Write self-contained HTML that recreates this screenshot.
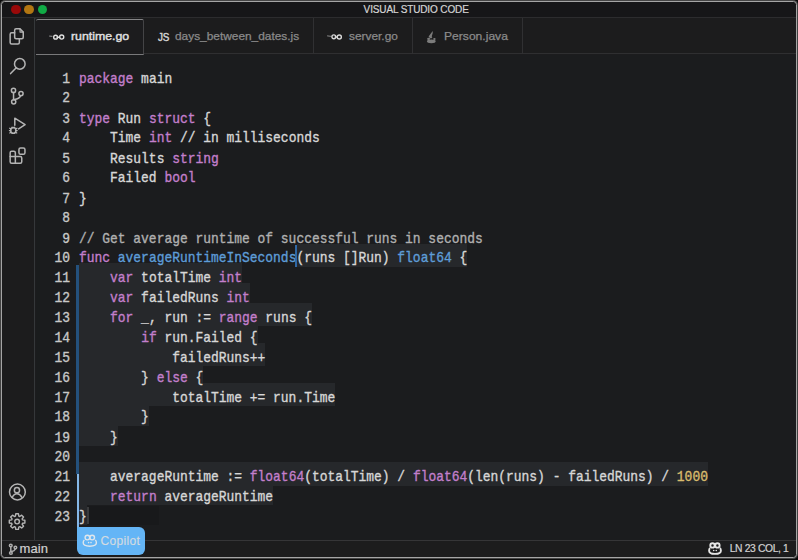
<!DOCTYPE html>
<html><head><meta charset="utf-8">
<style>
*{margin:0;padding:0;box-sizing:border-box}
html,body{width:798px;height:560px;overflow:hidden;background:#0a0a0a}
body{position:relative;font-family:"Liberation Sans",sans-serif}
.a{position:absolute}
#bg{left:1px;top:1px;width:796px;height:557px;background:#1c1c1e;border-radius:5px}
#title{left:1px;top:1px;width:796px;height:16.5px;background:#161618}
#tsep{left:2px;top:16.9px;width:794px;height:1.7px;background:#2c2c2e}
.dot{position:absolute;top:4.6px;width:9.8px;height:9.8px;border-radius:50%}
#ttl{left:363.6px;top:5.1px;font-size:10px;color:#d4d4d4;line-height:10px;white-space:nowrap;letter-spacing:-0.13px;-webkit-text-stroke:0.2px}
#act{left:2px;top:17.5px;width:32.5px;height:522.5px;background:#1c1c1d}
#actsep{left:33.6px;top:17.5px;width:1.9px;height:522.5px;background:#35383a}
#actsh{left:35.5px;top:55px;width:4px;height:485px;background:#1a1c1d}
#tabs{left:35.5px;top:17.5px;width:760.5px;height:36px;background:#1c1c1d}
#tabsep{left:35.5px;top:53.2px;width:760.5px;height:1.2px;background:#2f2f31}
.tsp{position:absolute;top:17.5px;width:1.2px;height:36px;background:#303032}
.tt{position:absolute;top:30px;font-size:11px;line-height:12px;color:#8a8a8a;white-space:nowrap;-webkit-text-stroke:0.25px;transform-origin:0 0}
#activetab{left:35.5px;top:18.5px;width:108.6px;height:36.4px;background:#1c1c1e;border-top:1.5px solid #858587;border-bottom:1.5px solid #79797b;border-right:1.3px solid #444446;border-radius:2px 2px 0 0}
#editor{left:35.5px;top:55px;width:760.5px;height:485px;background:#1b1c1e}
.hl{position:absolute;height:23.1px;background:#26282b}
#lns{left:36px;top:69.75px;width:34px;text-align:right;font-family:"Liberation Mono",monospace;font-size:12.95px;line-height:18.4306px;color:#c8c8c8;white-space:pre;transform:scaleY(1.08);transform-origin:0 0;-webkit-text-stroke:0.32px}
#code{left:79px;top:69.75px;font-family:"Liberation Mono",monospace;font-size:12.95px;line-height:18.4306px;color:#d7d7d7;white-space:pre;transform:scaleY(1.08);transform-origin:0 0;-webkit-text-stroke:0.32px}
.k{color:#c37fcc}
.f{color:#5e9dd8}
.n{color:#d9bb6c}
.c{color:#b0b0b0}
#bar1{left:76.1px;top:264.9px;width:3.1px;height:208.7px;background:#24517d}
#bar2{left:76.6px;top:473.6px;width:2.6px;height:55px;background:#86b8e8}
#cur{left:294.8px;top:245px;width:2.2px;height:22px;background:#2f68a6}
#status{left:2px;top:540px;width:794px;height:17px;background:#1c1c1d}
#ssep{left:2px;top:539.8px;width:794px;height:1.3px;background:#353537}
#border{left:0.5px;top:0.8px;width:796.8px;height:557.4px;border:1.5px solid #a5a5a5;border-radius:3.5px;box-shadow:0 0 0 0.7px #5a5a5a}
#copilot{left:76.8px;top:526.8px;width:68.6px;height:28px;background:#64b5f6;border-radius:1px 6px 6px 6px}
</style></head><body>
<div id="bg" class="a"></div>
<div id="title" class="a"></div>
<div id="tsep" class="a"></div>
<div class="dot" style="left:11.1px;background:#990909"></div>
<div class="dot" style="left:24.4px;background:#b27612"></div>
<div class="dot" style="left:37.6px;background:#10aa45"></div>
<div id="ttl" class="a">VISUAL STUDIO CODE</div>
<div id="act" class="a"></div>
<div id="actsep" class="a"></div>
<div id="tabs" class="a"></div>
<div id="tabsep" class="a"></div>
<div id="activetab" class="a"></div>
<div class="tsp" style="left:312.8px"></div>
<div class="tsp" style="left:411.5px"></div>
<div class="tsp" style="left:522px"></div>
<div class="tt" style="left:70.8px;color:#dedede;transform:scaleX(1.12);-webkit-text-stroke:0.45px">runtime.go</div>
<div class="tt" style="left:175.3px;transform:scaleX(1.08)">days_between_dates.js</div>
<div class="tt" style="left:348.6px;transform:scaleX(1.08)">server.go</div>
<div class="tt" style="left:444px;transform:scaleX(1.1)">Person.java</div>
<svg class="a" style="left:48.5px;top:32px" width="17" height="10" viewBox="0 0 17 10" fill="none" stroke="#e0e0e0" stroke-width="1.4" stroke-linecap="round">
<path d="M0.6 4.1L3 4.3" stroke="#9a9a9a" stroke-width="1"/>
<circle cx="6.6" cy="5.15" r="1.9"/>
<circle cx="12.7" cy="5.05" r="2.05"/>
<path d="M8.2 5.3H10.6"/>
</svg>
<svg class="a" style="left:326.5px;top:32px" width="17" height="10" viewBox="0 0 17 10" fill="none" stroke="#d8d8d8" stroke-width="1.4" stroke-linecap="round">
<path d="M0.5 3.9L3.6 4.3" stroke="#8a8a8a" stroke-width="1"/>
<circle cx="6.8" cy="4.8" r="1.9"/>
<circle cx="12.3" cy="5" r="2.05"/>
<path d="M8.4 5H10.3"/>
</svg>
<div class="a" style="left:158.2px;top:30.9px;font-size:11.5px;line-height:12px;color:#d4d4d4;letter-spacing:-0.3px;-webkit-text-stroke:0.45px;transform:scaleX(0.86);transform-origin:0 0">JS</div>
<svg class="a" style="left:424px;top:29px" width="14" height="16" viewBox="0 0 14 16" fill="#7c7c7c" stroke="none">
<path d="M8.7 2L4.6 7.6Q5.3 9.2 7 9.6L8.3 8.4Q7.4 7.6 8 6.6Q9.2 4.6 8.7 2Z"/>
<ellipse cx="7.3" cy="12.3" rx="4.4" ry="1.9"/>
<ellipse cx="4.6" cy="9.9" rx="1.5" ry="1.1"/>
<ellipse cx="10.4" cy="9.9" rx="1.2" ry="1"/>
</svg>

<svg class="a" style="left:6px;top:24px" width="24" height="24" viewBox="0 0 24 24" fill="none" stroke="#b4b4b4" stroke-width="1.5" stroke-linejoin="round" stroke-linecap="round">
<path d="M10.15 4.85H14L17.25 8.1V13.35Q17.25 14.85 15.75 14.85H10.15Q8.65 14.85 8.65 13.35V6.35Q8.65 4.85 10.15 4.85Z"/>
<path d="M14 4.85V8.1H17.25" stroke-width="1.1"/>
<path d="M8.65 8.85H5.65Q4.15 8.85 4.15 10.35V18.55Q4.15 20.05 5.65 20.05H11.85Q13.35 20.05 13.35 18.55V14.85"/>
</svg>
<svg class="a" style="left:6px;top:54px" width="24" height="24" viewBox="0 0 24 24" fill="none" stroke="#b4b4b4" stroke-width="1.5" stroke-linecap="round">
<circle cx="13.8" cy="9.9" r="5.3"/>
<path d="M10 13.9L4.6 19.6"/>
</svg>
<svg class="a" style="left:6px;top:84px" width="24" height="24" viewBox="0 0 24 24" fill="none" stroke="#b4b4b4" stroke-width="1.5" stroke-linecap="round">
<circle cx="7.5" cy="6.4" r="2.1"/>
<circle cx="7.7" cy="17.8" r="2.1"/>
<circle cx="15" cy="9.6" r="2.1"/>
<path d="M7.55 8.5V15.7"/>
<path d="M14.6 11.7Q13.8 14.6 8.2 15.4"/>
</svg>
<svg class="a" style="left:6px;top:114px" width="24" height="24" viewBox="0 0 24 24" fill="none" stroke="#b4b4b4" stroke-width="1.5" stroke-linejoin="round" stroke-linecap="round">
<path d="M8.8 11.3V4.2L19.1 10.7L12.6 14.9"/>
<ellipse cx="7.3" cy="16.4" rx="2.6" ry="2.9" fill="#1c1c1d"/>
<path d="M3.6 14.2L4.9 14.8M3.4 16.6H4.7M3.8 19L4.9 18.3M11 14.2L9.7 14.8M11.2 16.6H9.9M10.8 19L9.7 18.3M6 13.2L6.7 13.9M8.6 13.2L7.9 13.9" stroke-width="1.2"/>
</svg>
<svg class="a" style="left:6px;top:144px" width="24" height="24" viewBox="0 0 24 24" fill="none" stroke="#b4b4b4" stroke-width="1.5" stroke-linejoin="round" stroke-linecap="round">
<path d="M5.65 7.35H7.85Q9.35 7.35 9.35 8.85V12.55H14.25Q15.75 12.55 15.75 14.05V17.85Q15.75 19.35 14.25 19.35H5.65Q4.15 19.35 4.15 17.85V8.85Q4.15 7.35 5.65 7.35Z"/>
<path d="M4.15 12.55H9.35V19.35"/>
<rect x="12.95" y="3.95" width="6" height="6.4" rx="1.6"/>
</svg>
<svg class="a" style="left:6px;top:480px" width="24" height="24" viewBox="0 0 24 24" fill="none" stroke="#b4b4b4" stroke-width="1.5" stroke-linecap="round">
<circle cx="11.4" cy="12" r="7.9"/>
<circle cx="10.95" cy="10.2" r="2.6"/>
<path d="M6.3 17.4Q8 13.7 10.95 13.7Q13.9 13.7 15.9 17.4"/>
</svg>
<svg class="a" style="left:6px;top:510px" width="24" height="24" viewBox="0 0 24 24" fill="none" stroke="#b4b4b4" stroke-width="1.4" stroke-linejoin="round">
<path d="M9.42 6.15 L9.76 3.81 L12.44 3.81 L12.78 6.15 L13.76 6.56 L15.66 5.15 L17.55 7.04 L16.14 8.94 L16.55 9.92 L18.89 10.26 L18.89 12.94 L16.55 13.28 L16.14 14.26 L17.55 16.16 L15.66 18.05 L13.76 16.64 L12.78 17.05 L12.44 19.39 L9.76 19.39 L9.42 17.05 L8.44 16.64 L6.54 18.05 L4.65 16.16 L6.06 14.26 L5.65 13.28 L3.31 12.94 L3.31 10.26 L5.65 9.92 L6.06 8.94 L4.65 7.04 L6.54 5.15 L8.44 6.56Z"/>
<circle cx="11.1" cy="11.6" r="2.3"/>
</svg>
<div id="editor" class="a"></div>
<div id="actsh" class="a"></div>
<div class="hl" style="left:296.56px;top:243.50px;width:170.94px"></div>
<div class="hl" style="left:79.00px;top:263.40px;width:163.17px"></div>
<div class="hl" style="left:79.00px;top:283.31px;width:170.94px"></div>
<div class="hl" style="left:79.00px;top:303.21px;width:233.10px"></div>
<div class="hl" style="left:79.00px;top:323.12px;width:178.71px"></div>
<div class="hl" style="left:79.00px;top:343.02px;width:186.48px"></div>
<div class="hl" style="left:79.00px;top:362.93px;width:124.32px"></div>
<div class="hl" style="left:79.00px;top:382.83px;width:256.41px"></div>
<div class="hl" style="left:79.00px;top:402.74px;width:69.93px"></div>
<div class="hl" style="left:79.00px;top:422.64px;width:38.85px"></div>
<div class="hl" style="left:79.00px;top:462.45px;width:629.37px"></div>
<div class="hl" style="left:79.00px;top:482.36px;width:194.25px"></div>
<div class="hl" style="left:79.00px;top:502.26px;width:7.77px"></div>
<div class="a" style="left:88px;top:506.3px;width:71px;height:18.7px;background:#18191b"></div>
<div class="a" style="left:87.4px;top:507px;width:1.3px;height:17.3px;background:#3a3b3d"></div>
<div id="lns" class="a">1
2
3
4
5
6
7
8
9
10
11
12
13
14
15
16
17
18
19
20
21
22
23</div>
<div id="code" class="a"><span class="k">package</span> main

<span class="k">type</span> Run <span class="k">struct</span> {
    Time <span class="k">int</span> // in milliseconds
    Results <span class="k">string</span>
    Failed <span class="k">bool</span>
}

<span class="c">// Get average runtime of successful runs in seconds</span>
<span class="k">func</span> <span class="f">averageRuntimeInSeconds</span>(runs []Run) <span class="f">float64</span> {
    <span class="k">var</span> totalTime <span class="k">int</span>
    <span class="k">var</span> failedRuns <span class="k">int</span>
    <span class="k">for</span> _, run := <span class="k">range</span> runs {
        <span class="k">if</span> run.Failed {
            failedRuns++
        } <span class="k">else</span> {
            totalTime += run.Time
        }
    }

    averageRuntime := <span class="k">float64</span>(totalTime) / <span class="k">float64</span>(len(runs) - failedRuns) / <span class="n">1000</span>
    <span class="k">return</span> averageRuntime
}</div>
<div id="bar1" class="a"></div>
<div id="bar2" class="a"></div>
<div id="cur" class="a"></div>
<div id="status" class="a"></div>
<div id="ssep" class="a"></div>

<svg class="a" style="left:6px;top:541px" width="14" height="16" viewBox="0 0 14 16" fill="none" stroke="#adadad" stroke-width="1.5" stroke-linecap="round">
<circle cx="4.75" cy="4.5" r="1.35"/>
<circle cx="4.9" cy="12" r="1.35"/>
<circle cx="9.4" cy="6.6" r="1.3"/>
<path d="M4.8 6.1V10.4M9.1 8.1Q8.6 10 5.4 10.6"/>
</svg>
<div class="a" style="left:19.6px;top:543px;font-size:13px;line-height:12px;color:#d0d0d0;letter-spacing:0.05px;-webkit-text-stroke:0.2px">main</div>
<svg class="a" style="left:706px;top:541px" width="18" height="16" viewBox="0 0 18 16" fill="none" stroke="#e6e6e6" stroke-width="1.9">
<circle cx="6.5" cy="4.4" r="2.2"/>
<circle cx="11.4" cy="4.4" r="2.2"/>
<path d="M4 6.9Q3.1 7.6 3.1 9.7Q3.1 12.9 9 12.9Q14.9 12.9 14.9 9.7Q14.9 7.6 14 6.9"/>
<circle cx="7.7" cy="9.5" r="0.8" fill="#e6e6e6" stroke="none"/>
<circle cx="10.3" cy="9.5" r="0.8" fill="#e6e6e6" stroke="none"/>
</svg>
<div class="a" style="left:729.7px;top:544px;font-size:10.3px;line-height:10px;color:#d2d2d2;letter-spacing:-0.35px;white-space:nowrap;-webkit-text-stroke:0.2px">LN 23 COL, 1</div>
<div id="copilot" class="a"></div>
<svg class="a" style="left:81px;top:533px" width="18" height="16" viewBox="0 0 18 16" fill="none" stroke="#dfe6ec" stroke-width="1.4">
<circle cx="6.4" cy="4.6" r="2.3"/>
<circle cx="11.2" cy="4.6" r="2.3"/>
<path d="M3.4 7Q2.2 7.8 2.2 9.8Q2.2 13.2 8.8 13.2Q15.4 13.2 15.4 9.8Q15.4 7.8 14.2 7"/>
<circle cx="7.6" cy="9.6" r="0.8" fill="#dfe6ec" stroke="none"/>
<circle cx="10" cy="9.6" r="0.8" fill="#dfe6ec" stroke="none"/>
</svg>
<div class="a" style="left:100.4px;top:535px;font-size:12px;line-height:12px;color:#d3dbe2;letter-spacing:0.35px;-webkit-text-stroke:0.15px">Copilot</div>

<div id="border" class="a"></div>
</body></html>
